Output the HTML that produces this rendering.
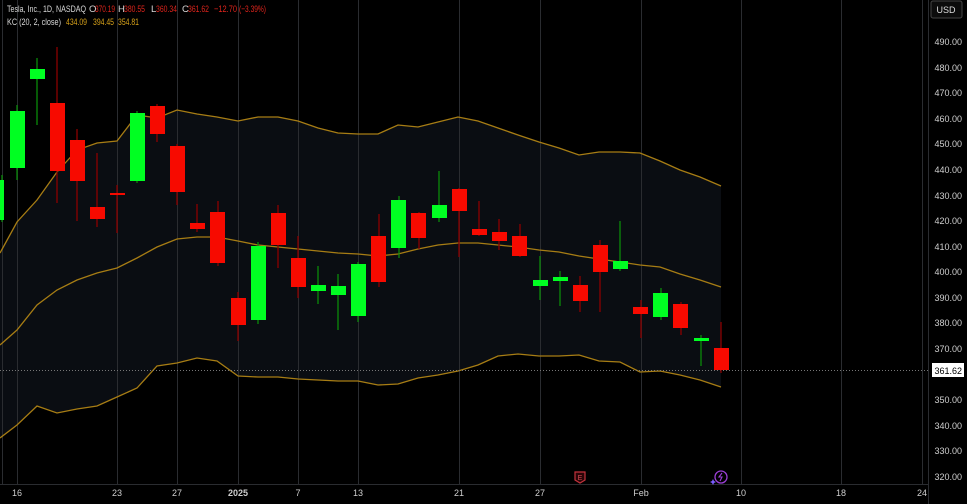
<!DOCTYPE html>
<html><head><meta charset="utf-8"><style>
body{margin:0;background:#000;width:967px;height:504px;overflow:hidden;font-family:"Liberation Sans",sans-serif}
svg{display:block}
</style></head><body>
<svg width="967" height="504" xmlns="http://www.w3.org/2000/svg">
<rect width="967" height="504" fill="#000"/>
<polygon fill="#0a0d12" points="0,253 17,222 37,200 57,172 77,150 97,143 117,141 137,115 157,118 177,110 197,114 217,117 238,121 258,117 278,117 298,121 318,128 338,133 358,134 378,134 398,125 418,127 438,122 458,117 478,121 498,128 518,135 539,142 559,148 579,155 599,152 620,152 640,153 660,161 680,170 700,177 721,186 721,387 700,380 680,375 660,371 640,372 620,362 599,361 579,355 559,356 539,356 518,354 498,356 478,365 458,371 438,375 418,378 398,384 378,385 358,381 338,381 318,380 298,379 278,377 258,377 238,376 217,361 197,358 177,363 157,366 137,388 117,397 97,406 77,409 57,413 37,406 17,425 0,438"/>
<g stroke="#2a2c30" stroke-width="1">
<line x1="2.5" y1="0" x2="2.5" y2="484"/><line x1="17.5" y1="0" x2="17.5" y2="484"/><line x1="117.5" y1="0" x2="117.5" y2="484"/><line x1="177.5" y1="0" x2="177.5" y2="484"/><line x1="238.5" y1="0" x2="238.5" y2="484"/><line x1="298.5" y1="0" x2="298.5" y2="484"/><line x1="358.5" y1="0" x2="358.5" y2="484"/><line x1="459.5" y1="0" x2="459.5" y2="484"/><line x1="540.5" y1="0" x2="540.5" y2="484"/><line x1="641.5" y1="0" x2="641.5" y2="484"/><line x1="741.5" y1="0" x2="741.5" y2="484"/><line x1="841.5" y1="0" x2="841.5" y2="484"/><line x1="922.5" y1="0" x2="922.5" y2="484"/>
</g>
<line x1="928.5" y1="0" x2="928.5" y2="504" stroke="#2a2c30"/>
<line x1="0" y1="484.5" x2="928" y2="484.5" stroke="#2a2c30"/>
<g fill="none" stroke="#a77d14" stroke-width="1.3">
<polyline points="0,253 17,222 37,200 57,172 77,150 97,143 117,141 137,115 157,118 177,110 197,114 217,117 238,121 258,117 278,117 298,121 318,128 338,133 358,134 378,134 398,125 418,127 438,122 458,117 478,121 498,128 518,135 539,142 559,148 579,155 599,152 620,152 640,153 660,161 680,170 700,177 721,186"/>
<polyline points="0,345 17,330 37,305 57,290 77,280 97,273 117,268 137,258 157,247 177,239 197,237 217,237 238,241 258,245 278,247 298,249 318,251 338,253 358,254 378,256 398,254 418,249 438,245 458,243 478,243 498,245 518,247 539,250 559,252 579,256 599,259 620,262 640,265 660,267 680,274 700,280 721,287"/>
<polyline points="0,438 17,425 37,406 57,413 77,409 97,406 117,397 137,388 157,366 177,363 197,358 217,361 238,376 258,377 278,377 298,379 318,380 338,381 358,381 378,385 398,384 418,378 438,375 458,371 478,365 498,356 518,354 539,356 559,356 579,355 599,361 620,362 640,372 660,371 680,375 700,380 721,387"/>
</g>
<line x1="0" y1="370.5" x2="928" y2="370.5" stroke="#777" stroke-dasharray="1,2"/>
<g stroke-width="1.3">
<line x1="2" y1="175" x2="2" y2="222" stroke="#0a8a0a"/><rect x="0" y="180" width="4" height="40" fill="#00ff22"/>
<line x1="17" y1="105" x2="17" y2="180" stroke="#0a8a0a"/><rect x="10" y="111" width="15" height="57" fill="#00ff22"/>
<line x1="37" y1="58" x2="37" y2="125" stroke="#0a8a0a"/><rect x="30" y="69" width="15" height="10" fill="#00ff22"/>
<line x1="57" y1="47" x2="57" y2="203" stroke="#8b0000"/><rect x="50" y="103" width="15" height="68" fill="#f70a00"/>
<line x1="77" y1="129" x2="77" y2="221" stroke="#8b0000"/><rect x="70" y="140" width="15" height="41" fill="#f70a00"/>
<line x1="97" y1="153" x2="97" y2="227" stroke="#8b0000"/><rect x="90" y="207" width="15" height="12" fill="#f70a00"/>
<line x1="117" y1="185" x2="117" y2="233" stroke="#8b0000"/><rect x="110" y="193" width="15" height="2" fill="#f70a00"/>
<line x1="137" y1="111" x2="137" y2="183" stroke="#0a8a0a"/><rect x="130" y="113" width="15" height="68" fill="#00ff22"/>
<line x1="157" y1="104" x2="157" y2="142" stroke="#8b0000"/><rect x="150" y="106" width="15" height="28" fill="#f70a00"/>
<line x1="177" y1="144" x2="177" y2="205" stroke="#8b0000"/><rect x="170" y="146" width="15" height="46" fill="#f70a00"/>
<line x1="197" y1="204" x2="197" y2="232" stroke="#8b0000"/><rect x="190" y="223" width="15" height="6" fill="#f70a00"/>
<line x1="218" y1="201" x2="218" y2="266" stroke="#8b0000"/><rect x="210" y="212" width="15" height="51" fill="#f70a00"/>
<line x1="238" y1="292" x2="238" y2="341" stroke="#8b0000"/><rect x="231" y="298" width="15" height="27" fill="#f70a00"/>
<line x1="258" y1="242" x2="258" y2="324" stroke="#0a8a0a"/><rect x="251" y="246" width="15" height="74" fill="#00ff22"/>
<line x1="278" y1="205" x2="278" y2="268" stroke="#8b0000"/><rect x="271" y="213" width="15" height="32" fill="#f70a00"/>
<line x1="298" y1="236" x2="298" y2="298" stroke="#8b0000"/><rect x="291" y="258" width="15" height="29" fill="#f70a00"/>
<line x1="318" y1="266" x2="318" y2="304" stroke="#0a8a0a"/><rect x="311" y="285" width="15" height="6" fill="#00ff22"/>
<line x1="338" y1="274" x2="338" y2="330" stroke="#0a8a0a"/><rect x="331" y="286" width="15" height="9" fill="#00ff22"/>
<line x1="358" y1="262" x2="358" y2="322" stroke="#0a8a0a"/><rect x="351" y="264" width="15" height="52" fill="#00ff22"/>
<line x1="379" y1="214" x2="379" y2="287" stroke="#8b0000"/><rect x="371" y="236" width="15" height="46" fill="#f70a00"/>
<line x1="399" y1="196" x2="399" y2="258" stroke="#0a8a0a"/><rect x="391" y="200" width="15" height="48" fill="#00ff22"/>
<line x1="419" y1="212" x2="419" y2="249" stroke="#8b0000"/><rect x="411" y="213" width="15" height="25" fill="#f70a00"/>
<line x1="439" y1="171" x2="439" y2="222" stroke="#0a8a0a"/><rect x="432" y="205" width="15" height="13" fill="#00ff22"/>
<line x1="459" y1="188" x2="459" y2="257" stroke="#8b0000"/><rect x="452" y="189" width="15" height="22" fill="#f70a00"/>
<line x1="479" y1="201" x2="479" y2="236" stroke="#8b0000"/><rect x="472" y="229" width="15" height="6" fill="#f70a00"/>
<line x1="499" y1="219" x2="499" y2="250" stroke="#8b0000"/><rect x="492" y="232" width="15" height="9" fill="#f70a00"/>
<line x1="520" y1="224" x2="520" y2="257" stroke="#8b0000"/><rect x="512" y="236" width="15" height="20" fill="#f70a00"/>
<line x1="540" y1="256" x2="540" y2="300" stroke="#0a8a0a"/><rect x="533" y="280" width="15" height="6" fill="#00ff22"/>
<line x1="560" y1="271" x2="560" y2="306" stroke="#0a8a0a"/><rect x="553" y="277" width="15" height="4" fill="#00ff22"/>
<line x1="580" y1="276" x2="580" y2="312" stroke="#8b0000"/><rect x="573" y="285" width="15" height="16" fill="#f70a00"/>
<line x1="600" y1="240" x2="600" y2="312" stroke="#8b0000"/><rect x="593" y="245" width="15" height="27" fill="#f70a00"/>
<line x1="620" y1="221" x2="620" y2="271" stroke="#0a8a0a"/><rect x="613" y="261" width="15" height="8" fill="#00ff22"/>
<line x1="641" y1="300" x2="641" y2="338" stroke="#8b0000"/><rect x="633" y="307" width="15" height="7" fill="#f70a00"/>
<line x1="661" y1="288" x2="661" y2="320" stroke="#0a8a0a"/><rect x="653" y="293" width="15" height="24" fill="#00ff22"/>
<line x1="681" y1="302" x2="681" y2="335" stroke="#8b0000"/><rect x="673" y="304" width="15" height="24" fill="#f70a00"/>
<line x1="701" y1="335" x2="701" y2="366" stroke="#0a8a0a"/><rect x="694" y="338" width="15" height="3" fill="#00ff22"/>
<line x1="721" y1="322" x2="721" y2="373" stroke="#8b0000"/><rect x="714" y="348" width="15" height="22" fill="#f70a00"/>
</g>
<g font-size="9.5">
<text x="7" y="12" fill="#d8d8d8" textLength="79" lengthAdjust="spacingAndGlyphs">Tesla, Inc., 1D, NASDAQ</text>
<text x="89" y="12" fill="#d8d8d8">O</text>
<text x="95" y="12" fill="#e0241c" textLength="20" lengthAdjust="spacingAndGlyphs">370.19</text>
<text x="118" y="12" fill="#d8d8d8">H</text>
<text x="124" y="12" fill="#e0241c" textLength="21" lengthAdjust="spacingAndGlyphs">380.55</text>
<text x="151" y="12" fill="#d8d8d8">L</text>
<text x="156" y="12" fill="#e0241c" textLength="21" lengthAdjust="spacingAndGlyphs">360.34</text>
<text x="182" y="12" fill="#d8d8d8">C</text>
<text x="188" y="12" fill="#e0241c" textLength="21" lengthAdjust="spacingAndGlyphs">361.62</text>
<text x="214" y="12" fill="#e0241c" textLength="23" lengthAdjust="spacingAndGlyphs">−12.70</text>
<text x="239" y="12" fill="#e0241c" textLength="27" lengthAdjust="spacingAndGlyphs">(−3.39%)</text>
<text x="7" y="25" fill="#d8d8d8" textLength="54" lengthAdjust="spacingAndGlyphs">KC (20, 2, close)</text>
<text x="66" y="25" fill="#d8a21a" textLength="21" lengthAdjust="spacingAndGlyphs">434.09</text>
<text x="93" y="25" fill="#d8a21a" textLength="21" lengthAdjust="spacingAndGlyphs">394.45</text>
<text x="118" y="25" fill="#d8a21a" textLength="21" lengthAdjust="spacingAndGlyphs">354.81</text>
</g>
<g font-size="9" fill="#cfcfcf" text-anchor="end">
<text x="962" y="45">490.00</text><text x="962" y="71">480.00</text><text x="962" y="96">470.00</text><text x="962" y="122">460.00</text><text x="962" y="147">450.00</text><text x="962" y="173">440.00</text><text x="962" y="199">430.00</text><text x="962" y="224">420.00</text><text x="962" y="250">410.00</text><text x="962" y="275">400.00</text><text x="962" y="301">390.00</text><text x="962" y="326">380.00</text><text x="962" y="352">370.00</text><text x="962" y="403">350.00</text><text x="962" y="429">340.00</text><text x="962" y="454">330.00</text><text x="962" y="480">320.00</text>
</g>
<rect x="931" y="1" width="31" height="17" rx="2" fill="#0c0c0c" stroke="#444"/>
<text x="946" y="13" font-size="9" fill="#ddd" text-anchor="middle">USD</text>
<rect x="932" y="363" width="32" height="14" fill="#fff"/>
<text x="962" y="374" font-size="9" fill="#000" text-anchor="end">361.62</text>
<g font-size="9" fill="#cfcfcf" text-anchor="middle">
<text x="17" y="496">16</text><text x="117" y="496">23</text><text x="177" y="496">27</text><text x="238" y="496" font-weight="bold">2025</text><text x="298" y="496">7</text><text x="358" y="496">13</text><text x="459" y="496">21</text><text x="540" y="496">27</text><text x="641" y="496">Feb</text><text x="741" y="496">10</text><text x="841" y="496">18</text><text x="922" y="496">24</text>
</g>
<path d="M575,472 h10 v8 l-5,3 l-5,-3 z" fill="#2a0508" stroke="#c2323c" stroke-width="1.2"/>
<text x="580" y="480" font-size="7" fill="#d24a52" text-anchor="middle">E</text>
<circle cx="721" cy="477" r="6" fill="none" stroke="#9b3fd6" stroke-width="1.3"/>
<path d="M722,473 l-3,4 h3 l-2,4" fill="none" stroke="#9b3fd6" stroke-width="1.1"/>
<path d="M713,479 l1,2 l2,1 l-2,1 l-1,2 l-1,-2 l-2,-1 l2,-1 z" fill="#7b5cff"/>
</svg>
</body></html>
